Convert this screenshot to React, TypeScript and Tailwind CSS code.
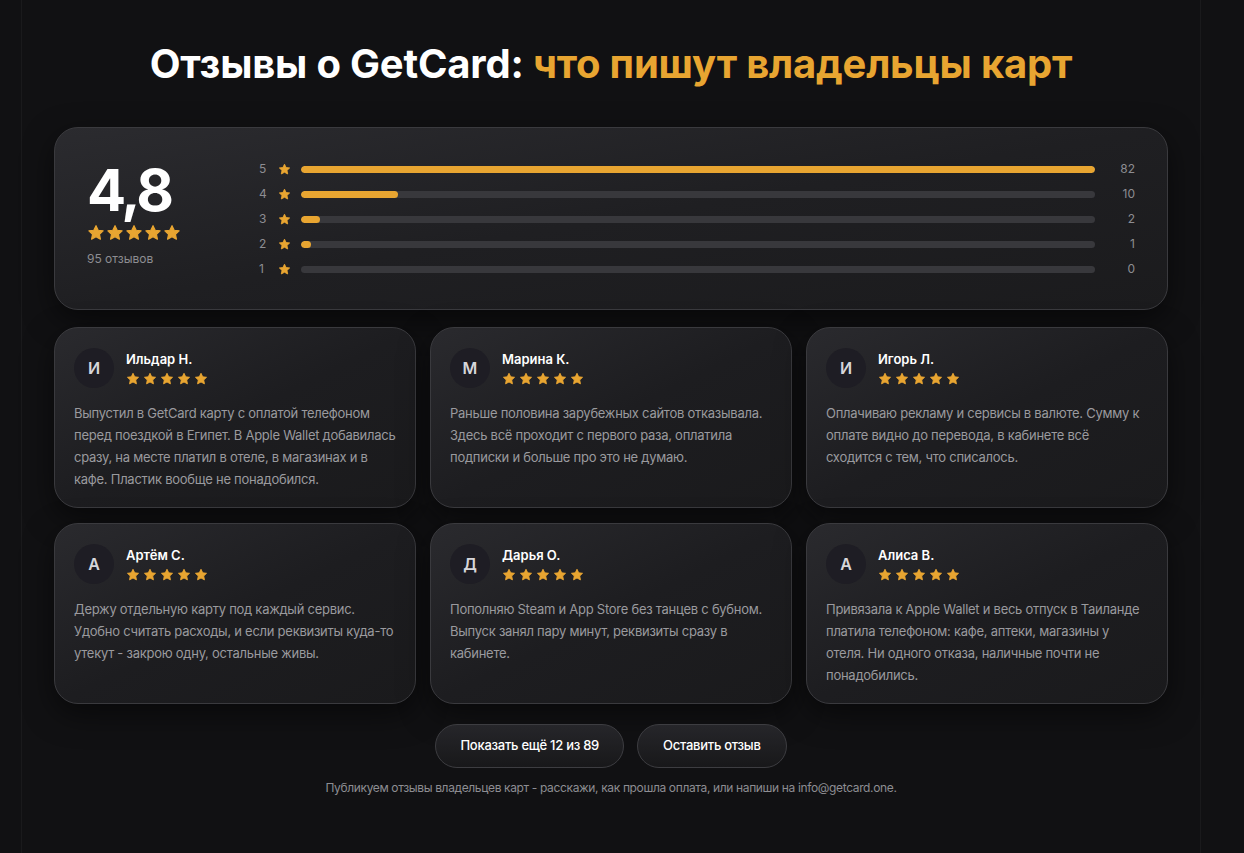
import React from 'react'

const font = { fontFamily: 'Inter, "Noto Sans", sans-serif' }

const bars = [
    { n: 5, count: 82 },
    { n: 4, count: 10 },
    { n: 3, count: 2 },
    { n: 2, count: 1 },
    { n: 1, count: 0 },
]

const reviews = [
    {
        initial: 'И',
        name: 'Ильдар Н.',
        text: 'Выпустил в GetCard карту с оплатой телефоном перед поездкой в Египет. В Apple Wallet добавилась сразу, на месте платил в отеле, в магазинах и в кафе. Пластик вообще не понадобился.',
    },
    {
        initial: 'М',
        name: 'Марина К.',
        text: 'Раньше половина зарубежных сайтов отказывала. Здесь всё проходит с первого раза, оплатила подписки и больше про это не думаю.',
    },
    {
        initial: 'И',
        name: 'Игорь Л.',
        text: 'Оплачиваю рекламу и сервисы в валюте. Сумму к оплате видно до перевода, в кабинете всё сходится с тем, что списалось.',
    },
    {
        initial: 'А',
        name: 'Артём С.',
        text: 'Держу отдельную карту под каждый сервис. Удобно считать расходы, и если реквизиты куда-то утекут - закрою одну, остальные живы.',
    },
    {
        initial: 'Д',
        name: 'Дарья О.',
        text: 'Пополняю Steam и App Store без танцев с бубном. Выпуск занял пару минут, реквизиты сразу в кабинете.',
    },
    {
        initial: 'А',
        name: 'Алиса В.',
        text: 'Привязала к Apple Wallet и весь отпуск в Таиланде платила телефоном: кафе, аптеки, магазины у отеля. Ни одного отказа, наличные почти не понадобились.',
    },
]

function Star({ className }: { className: string }) {
    return (
        <svg viewBox="0 0 24 24" className={className} fill="#e8a531">
            <path
                d="M12 2.2l2.9 6.1 6.6.8-4.9 4.6 1.3 6.6L12 17.1l-5.9 3.2 1.3-6.6L2.5 9.1l6.6-.8z"
                stroke="#e8a531"
                strokeWidth="1.6"
                strokeLinejoin="round"
            />
        </svg>
    )
}

function Stars({ size, gap }: { size: string; gap: string }) {
    return (
        <div className={`flex ${gap}`}>
            {[0, 1, 2, 3, 4].map((i) => (
                <Star key={i} className={size} />
            ))}
        </div>
    )
}

export default function App() {
    const max = 82
    return (
        <div className="min-h-screen bg-[#111113] text-white" style={font}>
            <div className="pl-[21px]">
                <div className="w-[1180px] min-h-[853px] border-x border-white/[0.04] px-[32px] pt-[38px] pb-10">
                    <h1 className="text-center text-[40px] font-bold tracking-[-0.005em] leading-[52px]">
                        Отзывы о GetCard: <span className="text-[#e8a531]">что пишут владельцы карт</span>
                    </h1>

                    <div className="mt-[37px] h-[183px] rounded-[24px] border border-[#3a3a3e] bg-gradient-to-br from-[#2b2b2f] via-[#1f1f22] to-[#1b1b1d] shadow-[0_10px_30px_rgba(0,0,0,0.5)] flex items-start px-[32px] pt-[27px]">
                        <div className="w-[172px] shrink-0">
                            <div className="text-[58px] font-bold leading-[70px] tracking-[-0.05em]">4,8</div>
                            <div className="mt-[-1px]">
                                <Stars size="w-[18px] h-[18px]" gap="gap-[1px]" />
                            </div>
                            <div className="mt-[8px] text-[12px] text-[#8d8d92]">95 отзывов</div>
                        </div>
                        <div className="flex-1 pt-[6px] flex flex-col gap-[9px]">
                            {bars.map((b) => {
                                const pct = b.count === 0 ? 0 : Math.max((b.count / max) * 100, 1.3)
                                return (
                                    <div key={b.n} className="flex items-center h-[16px]">
                                        <span className="w-[14px] text-[12px] text-[#8d8d92] text-left">{b.n}</span>
                                        <Star className="w-[13px] h-[13px] ml-[5px]" />
                                        <div className="ml-[10px] flex-1 h-[7px] rounded-full bg-[#38383c] overflow-hidden">
                                            {pct > 0 && (
                                                <div className="h-full rounded-full bg-[#e8a531]" style={{ width: `${pct}%` }} />
                                            )}
                                        </div>
                                        <span className="w-[40px] text-right text-[12px] text-[#8d8d92]">{b.count}</span>
                                    </div>
                                )
                            })}
                        </div>
                    </div>

                    <div className="mt-[17px] grid grid-cols-3 gap-x-[14px] gap-y-[15px]">
                        {reviews.map((r, i) => (
                            <div
                                key={i}
                                className="h-[181px] rounded-[24px] border border-[#3a3a3e] bg-gradient-to-br from-[#2a2a2e] via-[#1d1d20] to-[#1a1a1c] shadow-[0_10px_30px_rgba(0,0,0,0.5)] px-[19px] pt-[20px]"
                            >
                                <div className="flex items-center gap-[12px]">
                                    <div className="w-[40px] h-[40px] rounded-full bg-[#1e1d24] flex items-center justify-center text-[16px] font-semibold text-[#d6d6da]">
                                        {r.initial}
                                    </div>
                                    <div>
                                        <div className="text-[13px] font-semibold leading-[16px] text-white">{r.name}</div>
                                        <div className="mt-[5px]">
                                            <Stars size="w-[14px] h-[14px]" gap="gap-[3px]" />
                                        </div>
                                    </div>
                                </div>
                                <p className="mt-[14px] text-[13px] leading-[22px] tracking-[-0.02em] text-[#9a9a9e]">{r.text}</p>
                            </div>
                        ))}
                    </div>

                    <div className="mt-[20px] flex justify-center gap-[13px]">
                        <button className="h-[44px] px-[24px] rounded-full border border-[#3d3d41] bg-gradient-to-b from-[#26262a] to-[#18181a] text-[13px] font-medium tracking-[-0.02em] text-white">
                            Показать ещё 12 из 89
                        </button>
                        <button className="h-[44px] px-[25px] rounded-full border border-[#3d3d41] bg-gradient-to-b from-[#26262a] to-[#18181a] text-[13px] font-medium tracking-[-0.02em] text-white">
                            Оставить отзыв
                        </button>
                    </div>
                    <p className="mt-[11px] text-center text-[12px] tracking-[-0.03em] text-[#8d8d92]">
                        Публикуем отзывы владельцев карт - расскажи, как прошла оплата, или напиши на info@getcard.one.
                    </p>
                </div>
            </div>
        </div>
    )
}
